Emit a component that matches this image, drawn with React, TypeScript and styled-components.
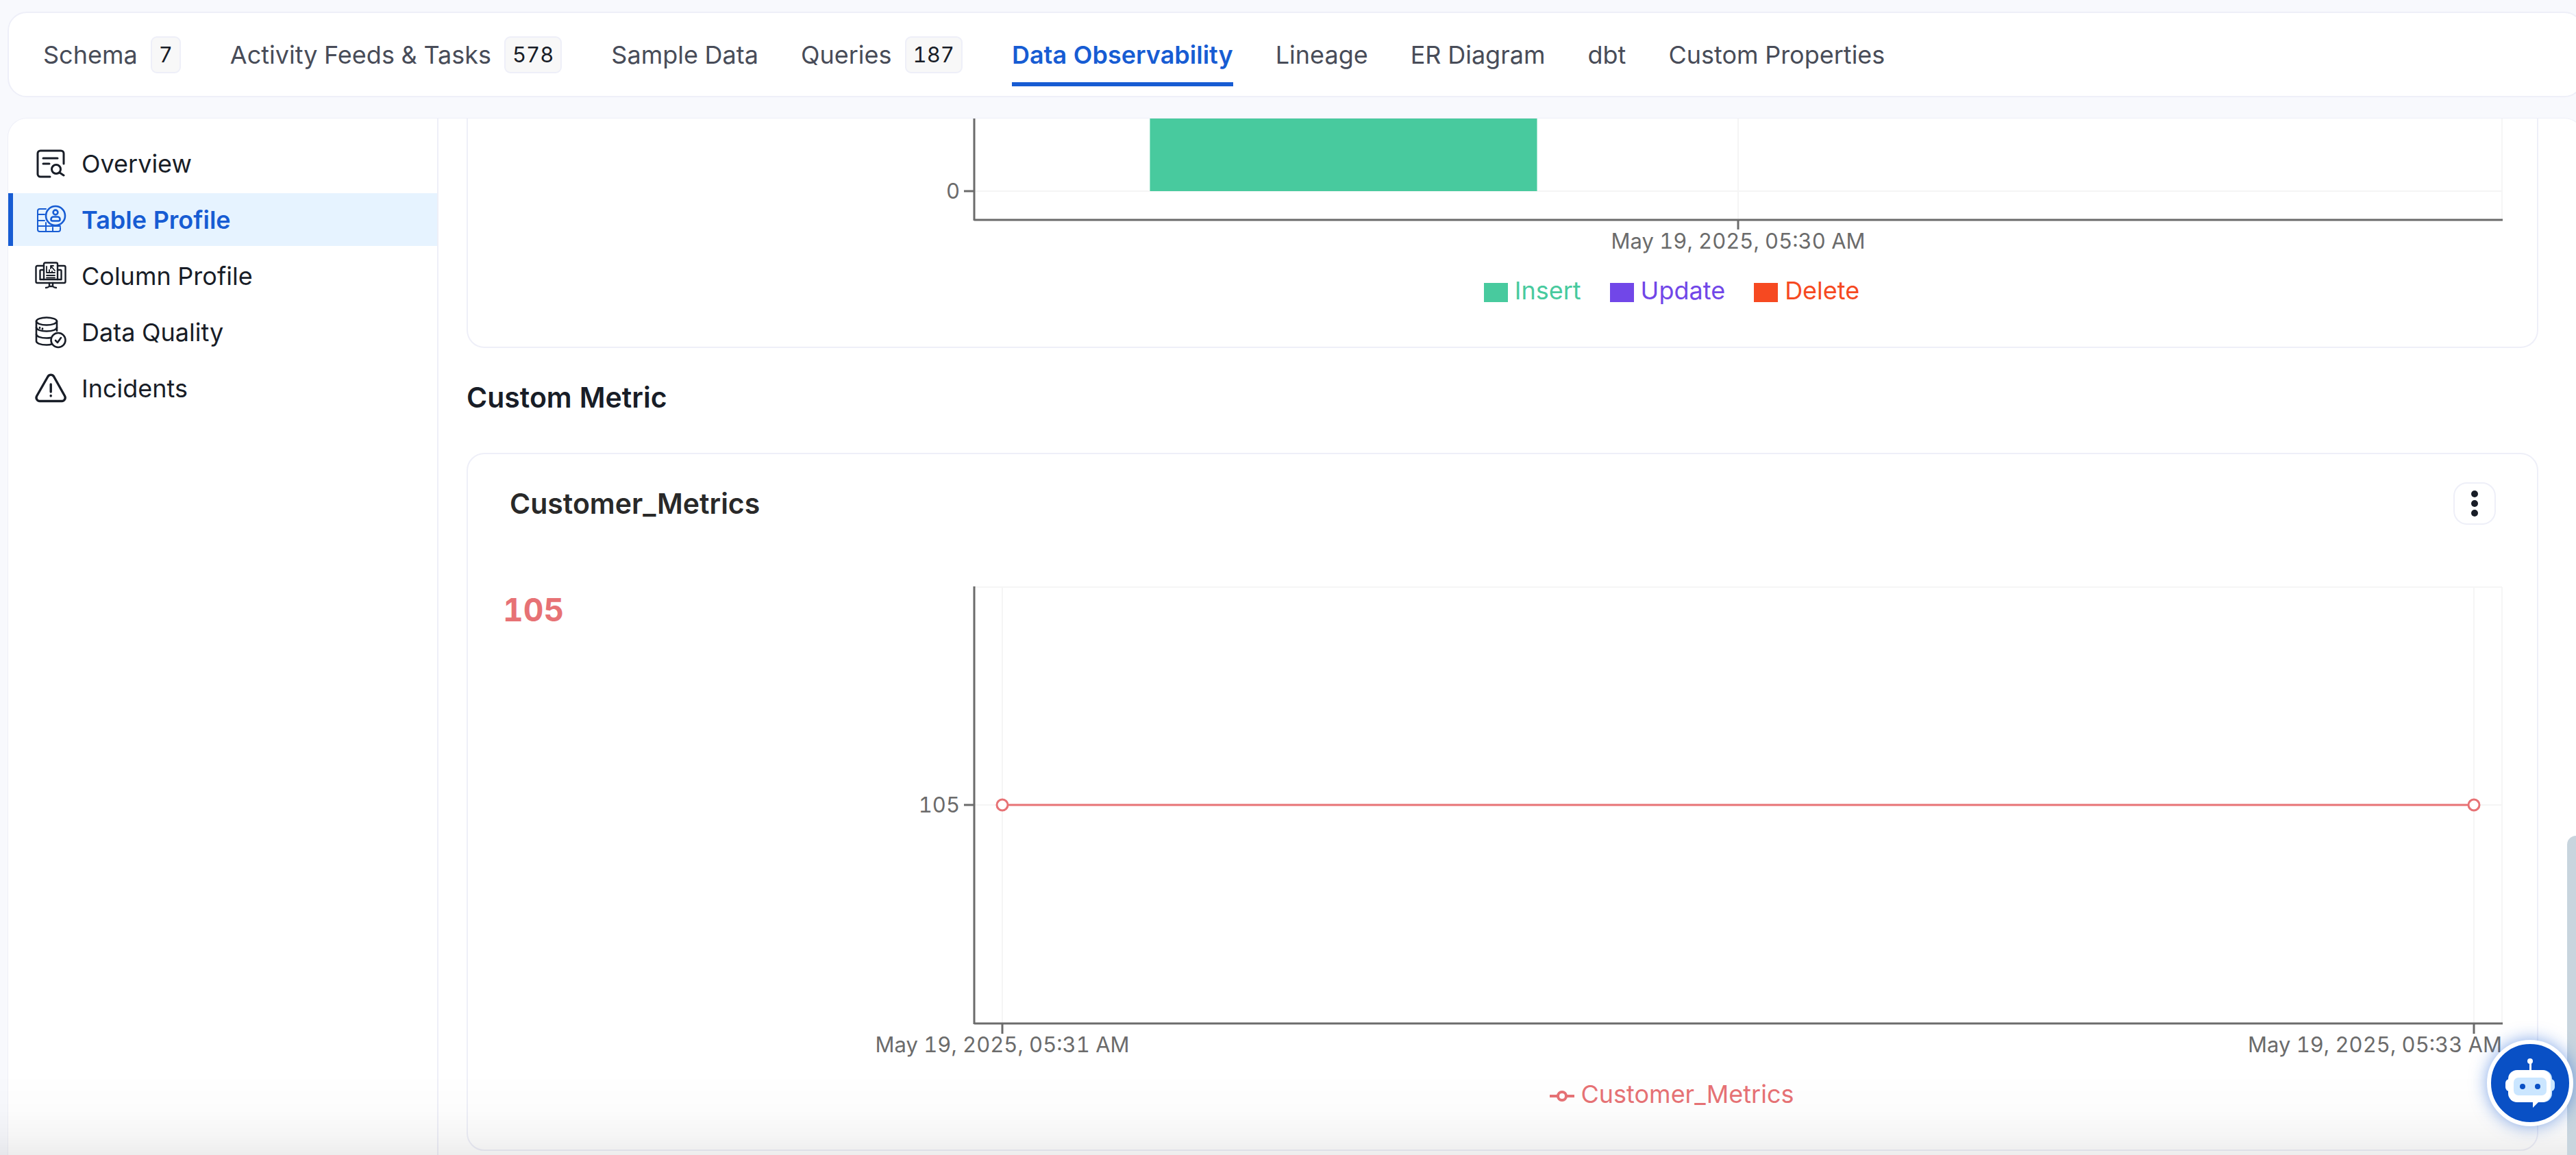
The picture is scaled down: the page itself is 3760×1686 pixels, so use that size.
import React, { useLayoutEffect, useRef, useState } from "react";
import styled, { createGlobalStyle } from "styled-components";

const BLUE = "#175cd3";
const INK = "#181d27";
const BORDER = "#eeeff8";
const AXIS = "#6b6b6b";
const GRID = "#f5f5f5";
const METRIC = "#e77275";

const GlobalStyle = createGlobalStyle`
  * { box-sizing: border-box; }
  html, body, #root { height: 100%; }
  body {
    margin: 0;
    overflow: hidden;
    background: #f8f9fd;
    color: ${INK};
    font-family: Inter, "Liberation Sans", sans-serif;
    font-size: 36px;
    font-variant-numeric: tabular-nums;
  }
`;

const Page = styled.div`
  display: flex;
  flex-direction: column;
  gap: 30px;
  height: 100%;
  padding: 17px 0 0 11px;
  margin-right: -11px;
`;

const TabBar = styled.nav`
  display: flex;
  align-items: flex-start;
  gap: 62px;
  height: 125px;
  flex: none;
  padding: 19px 50px;
  border: 2px solid ${BORDER};
  border-radius: 28px;
  background: #fff;
`;

const Tab = styled.a<{ $active?: boolean }>`
  display: flex;
  align-items: center;
  gap: 19px;
  height: 88px;
  padding-top: 2px;
  border-bottom: 6px solid ${(p) => (p.$active ? BLUE : "transparent")};
  color: ${(p) => (p.$active ? BLUE : "#484c58")};
  font-weight: ${(p) => (p.$active ? 600 : 400)};
  line-height: 54px;
  white-space: nowrap;
  text-decoration: none;
`;

const Count = styled.span`
  height: 54px;
  margin-right: 10px;
  padding: 0 10px;
  border: 2px solid ${BORDER};
  border-radius: 9px;
  background: #f8f8f8;
  color: ${INK};
  font-size: 31px;
  line-height: 50px;
`;

const Panel = styled.div`
  display: flex;
  flex: 1;
  min-height: 0;
  overflow: hidden;
  border: 1px solid ${BORDER};
  border-bottom: 0;
  border-radius: 28px 28px 0 0;
  background: #fff;
`;

const Sidebar = styled.nav`
  display: flex;
  flex-direction: column;
  gap: 5px;
  flex: none;
  width: 628px;
  padding-top: 27px;
  border-right: 2px solid ${BORDER};
`;

const SideLink = styled.a<{ $active?: boolean }>`
  display: flex;
  align-items: center;
  gap: 21px;
  height: 77px;
  padding-left: 31px;
  border-left: 7px solid ${(p) => (p.$active ? BLUE : "transparent")};
  background: ${(p) => (p.$active ? "#e6f3ff" : "transparent")};
  color: ${(p) => (p.$active ? BLUE : INK)};
  font-weight: ${(p) => (p.$active ? 600 : 400)};
  text-decoration: none;
`;

const SideIcon = styled.svg`
  width: 48px;
  height: 48px;
  flex: none;
  fill: none;
  stroke: currentColor;
  stroke-width: 3;
  stroke-linecap: round;
  stroke-linejoin: round;
`;

const Content = styled.main`
  flex: 1;
  min-width: 0;
  padding: 0 65px 0 41px;
`;

const Card = styled.section<{ $clipped?: boolean }>`
  padding: ${(p) => (p.$clipped ? "0 51px 55px 26px" : "41px 51px 54px 26px")};
  border: 2px solid ${BORDER};
  border-top-width: ${(p) => (p.$clipped ? 0 : 2)}px;
  border-radius: ${(p) => (p.$clipped ? "0 0 26px 26px" : "26px")};
  background: #fff;
`;

const SectionTitle = styled.h2`
  margin: 0;
  padding: 43px 0 52px;
  font-size: 41px;
  line-height: 58px;
  font-weight: 600;
`;

const CardHead = styled.header`
  display: flex;
  align-items: center;
  justify-content: space-between;
  height: 62px;
  padding: 0 9px 0 35px;
`;

const CardTitle = styled.h3`
  margin: 0;
  color: #292929;
  font-size: 41px;
  font-weight: 600;
`;

const MoreButton = styled.button`
  display: grid;
  place-items: center;
  width: 62px;
  height: 62px;
  padding: 0;
  border: 2px solid ${BORDER};
  border-radius: 20px;
  background: #fff;
  color: ${INK};
`;

const ChartRow = styled.div`
  display: grid;
  grid-template-columns: 519px 1fr;
`;

const Summary = styled.div`
  padding: 94px 0 0 25px;
  color: ${METRIC};
  font-size: 46px;
  line-height: 60px;
  font-weight: 700;
`;

const ChartColumn = styled.div`
  min-width: 0;
`;

const ChartSvg = styled.svg`
  display: block;
  width: 100%;
  overflow: visible;
  text {
    fill: ${AXIS};
    font-size: 31px;
  }
`;

const Legend = styled.ul`
  display: flex;
  justify-content: center;
  gap: 42px;
  margin: 0;
  padding: 0;
  list-style: none;
`;

const LegendItem = styled.li<{ $color: string }>`
  display: flex;
  align-items: center;
  gap: 10px;
  color: ${(p) => p.$color};
  line-height: 54px;
`;

const Swatch = styled.span`
  width: 35px;
  height: 28px;
  margin-top: 6px;
  background: currentColor;
`;

const BottomFade = styled.div`
  position: fixed;
  inset: auto 0 0 0;
  height: 120px;
  background: linear-gradient(
    to bottom,
    rgba(0, 0, 0, 0),
    rgba(0, 0, 0, 0.012) 45%,
    rgba(0, 0, 0, 0.035) 75%,
    rgba(0, 0, 0, 0.07)
  );
  pointer-events: none;
`;

const ScrollThumb = styled.div`
  position: fixed;
  right: 0;
  bottom: 0;
  width: 13px;
  height: 466px;
  border-radius: 13px 0 0 0;
  background: #c8d5de;
`;

const BotButton = styled.button`
  position: fixed;
  right: 4px;
  bottom: 42px;
  display: grid;
  place-items: center;
  width: 126px;
  height: 126px;
  padding: 0;
  border: 6px solid #fff;
  border-radius: 50%;
  background: #0950c5;
  box-shadow: 0 0 24px rgba(23, 92, 211, 0.55);
`;

function useWidth(): [React.RefObject<HTMLDivElement | null>, number] {
  const ref = useRef<HTMLDivElement>(null);
  const [width, setWidth] = useState(0);
  useLayoutEffect(() => {
    const el = ref.current;
    if (!el) return;
    const read = () => setWidth(el.clientWidth);
    read();
    const observer = new ResizeObserver(read);
    observer.observe(el);
    return () => observer.disconnect();
  }, []);
  return [ref, width];
}

/* Left edge of the plot area, where the y axis stands. */
const PLOT_LEFT = 194;

function OperationsChart() {
  const [ref, width] = useWidth();
  const span = width - PLOT_LEFT;
  const middle = PLOT_LEFT + span / 2;
  const bar = span * 0.2534;
  return (
    <ChartColumn ref={ref}>
      <ChartSvg height={224}>
        <g stroke={GRID} strokeWidth={2}>
          <line x1={PLOT_LEFT} x2={width} y1={106} y2={106} />
          <line x1={middle} x2={middle} y1={0} y2={147} />
          <line x1={width} x2={width} y1={0} y2={147} />
        </g>
        <rect x={PLOT_LEFT + span * 0.115} y={0} width={bar} height={106} fill="#48ca9e" />
        <g stroke={AXIS} strokeWidth={3}>
          <line x1={PLOT_LEFT} x2={PLOT_LEFT} y1={0} y2={149} />
          <line x1={PLOT_LEFT} x2={width + 1} y1={148} y2={148} />
          <line x1={PLOT_LEFT - 15} x2={PLOT_LEFT} y1={106} y2={106} />
          <line x1={middle} x2={middle} y1={148} y2={162} />
        </g>
        <text x={PLOT_LEFT - 21} y={117} textAnchor="end">0</text>
        <text x={middle} y={190} textAnchor="middle">May 19, 2025, 05:30 AM</text>
      </ChartSvg>
      <Legend>
        <LegendItem $color="#48ca9e"><Swatch />Insert</LegendItem>
        <LegendItem $color="#7147e8"><Swatch />Update</LegendItem>
        <LegendItem $color="#f64921"><Swatch />Delete</LegendItem>
      </Legend>
    </ChartColumn>
  );
}

function MetricChart() {
  const [ref, width] = useWidth();
  const first = PLOT_LEFT + 41;
  const last = width - 41;
  return (
    <ChartColumn ref={ref}>
      <ChartSvg height={804}>
        <g stroke={GRID} strokeWidth={2}>
          <line x1={PLOT_LEFT} x2={width} y1={91} y2={91} />
          <line x1={PLOT_LEFT} x2={width} y1={409} y2={409} />
          <line x1={first} x2={first} y1={91} y2={728} />
          <line x1={last} x2={last} y1={91} y2={728} />
          <line x1={width} x2={width} y1={91} y2={728} />
        </g>
        <g stroke={AXIS} strokeWidth={3}>
          <line x1={PLOT_LEFT} x2={PLOT_LEFT} y1={90} y2={729} />
          <line x1={PLOT_LEFT} x2={width + 1} y1={728} y2={728} />
          <line x1={PLOT_LEFT - 15} x2={PLOT_LEFT} y1={409} y2={409} />
          <line x1={first} x2={first} y1={728} y2={743} />
          <line x1={last} x2={last} y1={728} y2={743} />
        </g>
        <g stroke={METRIC} strokeWidth={3} fill="#fff">
          <line x1={first} x2={last} y1={409} y2={409} />
          <circle cx={first} cy={409} r={8} />
          <circle cx={last} cy={409} r={8} />
        </g>
        <text x={PLOT_LEFT - 21} y={420} textAnchor="end">105</text>
        <text x={first} y={770} textAnchor="middle">May 19, 2025, 05:31 AM</text>
        <text x={width} y={770} textAnchor="end">May 19, 2025, 05:33 AM</text>
      </ChartSvg>
      <Legend>
        <LegendItem $color={METRIC}>
          <svg width="36" height="36" viewBox="0 0 36 36" fill="none" stroke="currentColor" strokeWidth="4">
            <path d="M0 21h12M24 21h12" />
            <circle cx="18" cy="21" r="6" />
          </svg>
          Customer_Metrics
        </LegendItem>
      </Legend>
    </ChartColumn>
  );
}

const OverviewIcon = () => (
  <SideIcon viewBox="0 0 48 48">
    <path d="M23 43H9a4 4 0 0 1-4-4V9a4 4 0 0 1 4-4h30a4 4 0 0 1 4 4v15" />
    <path d="M13 16h21M13 24h9" />
    <circle cx="32" cy="32" r="6.5" />
    <path d="M37 37l6 4" />
  </SideIcon>
);

const TableProfileIcon = () => (
  <SideIcon viewBox="0 0 48 48">
    <g style={{ strokeWidth: 2 }}>
      <path d="M17 8H8a3 3 0 0 0-3 3v27a3 3 0 0 0 3 3h27a3 3 0 0 0 3-3v-3" />
      <path d="M5 16h10M5 25h10M5 33h33M17 28v13M27 35v6" />
    </g>
    <g style={{ strokeWidth: 2.6 }}>
      <circle cx="31" cy="18" r="14" />
      <circle cx="31" cy="13" r="3.4" />
      <path d="M28 19.500h6a3.500 3.500 0 0 1 3.500 3.500v.5a2 2 0 0 1-2 2h-9a2 2 0 0 1-2-2V23a3.500 3.500 0 0 1 3.500-3.500z" />
    </g>
  </SideIcon>
);

const ColumnProfileIcon = () => (
  <SideIcon viewBox="0 0 48 48">
    <g style={{ strokeWidth: 2.4 }}>
      <path d="M14 9H4.500a2 2 0 0 0-2 2v21a2 2 0 0 0 2 2h39a2 2 0 0 0 2-2V11a2 2 0 0 0-2-2H34" />
      <path d="M14 15h-4a1.500 1.500 0 0 0-1.500 1.500V29h31V16.500A1.500 1.500 0 0 0 38 15h-4" />
      <path d="M14 29V6.500a2 2 0 0 1 2-2h16a2 2 0 0 1 2 2V29" />
      <path d="M22 34v5M27 34v5M17 41c3 0 4-1 5-2h5c1 1 2 2 5 2" />
    </g>
    <g style={{ strokeWidth: 1.8 }}>
      <path d="M18 10v9h12M22 19v-4M26 19v-2M30 16l-6-7h4M24 9v4M18 23h12M18 26.500h12" />
    </g>
  </SideIcon>
);

const DataQualityIcon = () => (
  <SideIcon viewBox="0 0 48 48">
    <g style={{ strokeWidth: 2.6 }}>
      <ellipse cx="18" cy="8" rx="15" ry="5.500" />
      <path d="M3 8v29c0 3 6 5.500 15 5.500 3 0 5 0 7-1M33 8v14" />
      <path d="M3 17c0 3 6 5.500 15 5.500S33 20 33 17M3 27c0 3 6 5.500 15 5.500 2 0 4 0 5.500-.5" />
      <path d="M8 17v1M12 18.500v1" />
      <circle cx="35" cy="35.500" r="10.500" />
      <path d="M31 36l3 3 5-7" />
    </g>
  </SideIcon>
);

const IncidentsIcon = () => (
  <SideIcon viewBox="0 0 48 48" style={{ strokeWidth: 3.4 }}>
    <path d="M20 6.500a5 5 0 0 1 8.500 0l16 28.500a5 5 0 0 1-4.300 7.500H8A5 5 0 0 1 3.700 35z" />
    <path d="M24.200 18v11M24.200 34.500v.5" />
  </SideIcon>
);

const tabs = [
  { label: "Schema", count: 7 },
  { label: "Activity Feeds & Tasks", count: 578 },
  { label: "Sample Data" },
  { label: "Queries", count: 187 },
  { label: "Data Observability", active: true },
  { label: "Lineage" },
  { label: "ER Diagram" },
  { label: "dbt" },
  { label: "Custom Properties" },
];

const sections = [
  { label: "Overview", Icon: OverviewIcon },
  { label: "Table Profile", Icon: TableProfileIcon, active: true },
  { label: "Column Profile", Icon: ColumnProfileIcon },
  { label: "Data Quality", Icon: DataQualityIcon },
  { label: "Incidents", Icon: IncidentsIcon },
];

export default function App() {
  return (
    <>
      <GlobalStyle />
      <Page>
        <TabBar aria-label="Table tabs">
          {tabs.map((tab) => (
            <Tab key={tab.label} href="#" $active={tab.active}>
              {tab.label}
              {tab.count !== undefined && <Count>{tab.count}</Count>}
            </Tab>
          ))}
        </TabBar>
        <Panel>
          <Sidebar aria-label="Profiler sections">
            {sections.map(({ label, Icon, active }) => (
              <SideLink key={label} href="#" $active={active}>
                <Icon />
                {label}
              </SideLink>
            ))}
          </Sidebar>
          <Content>
            <Card $clipped>
              <ChartRow>
                <div />
                <OperationsChart />
              </ChartRow>
            </Card>
            <SectionTitle>Custom Metric</SectionTitle>
            <Card>
              <CardHead>
                <CardTitle>Customer_Metrics</CardTitle>
                <MoreButton type="button" aria-label="More actions">
                  <svg width="12" height="40" viewBox="0 0 12 40" fill="currentColor">
                    <circle cx="6" cy="6" r="5" />
                    <circle cx="6" cy="20" r="5" />
                    <circle cx="6" cy="34" r="5" />
                  </svg>
                </MoreButton>
              </CardHead>
              <ChartRow>
                <Summary>105</Summary>
                <MetricChart />
              </ChartRow>
            </Card>
          </Content>
        </Panel>
      </Page>
      <BottomFade />
      <ScrollThumb />
      <BotButton type="button" aria-label="Open assistant">
        <svg width="74" height="74" viewBox="0 0 74 74">
          <path d="M36 4h3v16h-3z" fill="#fff" />
          <circle cx="37" cy="5" r="4" fill="#fff" />
          <rect x="60" y="31" width="13" height="18" rx="6" fill="#cbe6ff" />
          <rect x="1" y="31" width="13" height="18" rx="6" fill="#fff" />
          <rect x="12" y="18" width="57" height="47" rx="13" fill="#cbe6ff" />
          <rect x="5" y="18" width="62" height="47" rx="13" fill="#fff" />
          <path d="M41 63v10l10-10z" fill="#fff" />
          <rect x="13" y="29" width="48" height="26" rx="7" fill="#cbe6ff" />
          <circle cx="26" cy="42" r="4" fill="#0950c5" />
          <circle cx="48" cy="42" r="4" fill="#0950c5" />
        </svg>
      </BotButton>
    </>
  );
}
